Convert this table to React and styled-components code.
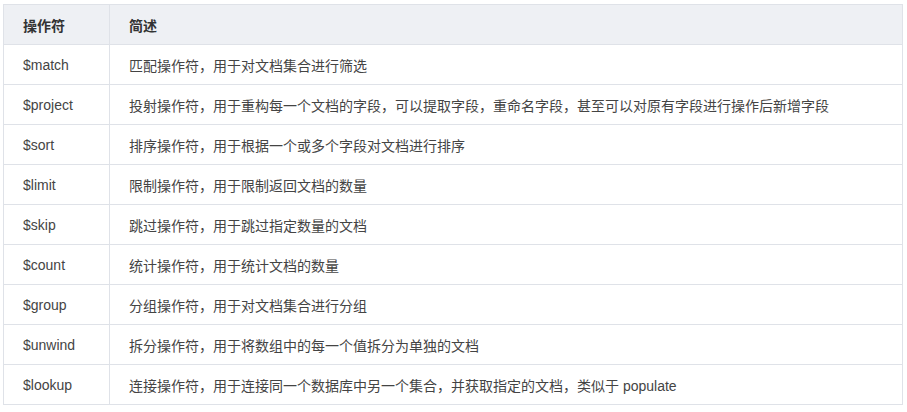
import React from "react";
import styled, { createGlobalStyle } from "styled-components";

const Global = createGlobalStyle`
  html, body { margin: 0; padding: 0; background: #fff; }
  body { font-family: "Liberation Sans", "Noto Sans CJK SC", sans-serif; }
`;

const Wrap = styled.div`
  padding: 4px 0 0 3px;
`;

const Table = styled.table`
  border-collapse: collapse;
  width: 900px;
  table-layout: fixed;
  font-size: 14px;
  color: #444;
`;

const HeadCell = styled.th`
  height: 40px;
  box-sizing: border-box;
  padding: 0 19px;
  text-align: left;
  font-weight: 700;
  color: #333;
  background: #eef0f4;
  border: 1px solid #dfe2e8;
  width: ${(p) => p.$w || "auto"};
`;

const Cell = styled.td`
  height: 40px;
  box-sizing: border-box;
  padding: 0 19px;
  border: 1px solid #dfe2e8;
  white-space: nowrap;
`;

const rows = [
  ["$match", "匹配操作符，用于对文档集合进行筛选"],
  ["$project", "投射操作符，用于重构每一个文档的字段，可以提取字段，重命名字段，甚至可以对原有字段进行操作后新增字段"],
  ["$sort", "排序操作符，用于根据一个或多个字段对文档进行排序"],
  ["$limit", "限制操作符，用于限制返回文档的数量"],
  ["$skip", "跳过操作符，用于跳过指定数量的文档"],
  ["$count", "统计操作符，用于统计文档的数量"],
  ["$group", "分组操作符，用于对文档集合进行分组"],
  ["$unwind", "拆分操作符，用于将数组中的每一个值拆分为单独的文档"],
  ["$lookup", "连接操作符，用于连接同一个数据库中另一个集合，并获取指定的文档，类似于 populate"],
];

export default function App() {
  return (
    <Wrap>
      <Global />
      <Table>
        <thead>
          <tr>
            <HeadCell $w="106px">操作符</HeadCell>
            <HeadCell>简述</HeadCell>
          </tr>
        </thead>
        <tbody>
          {rows.map(([op, desc]) => (
            <tr key={op}>
              <Cell>{op}</Cell>
              <Cell>{desc}</Cell>
            </tr>
          ))}
        </tbody>
      </Table>
    </Wrap>
  );
}
